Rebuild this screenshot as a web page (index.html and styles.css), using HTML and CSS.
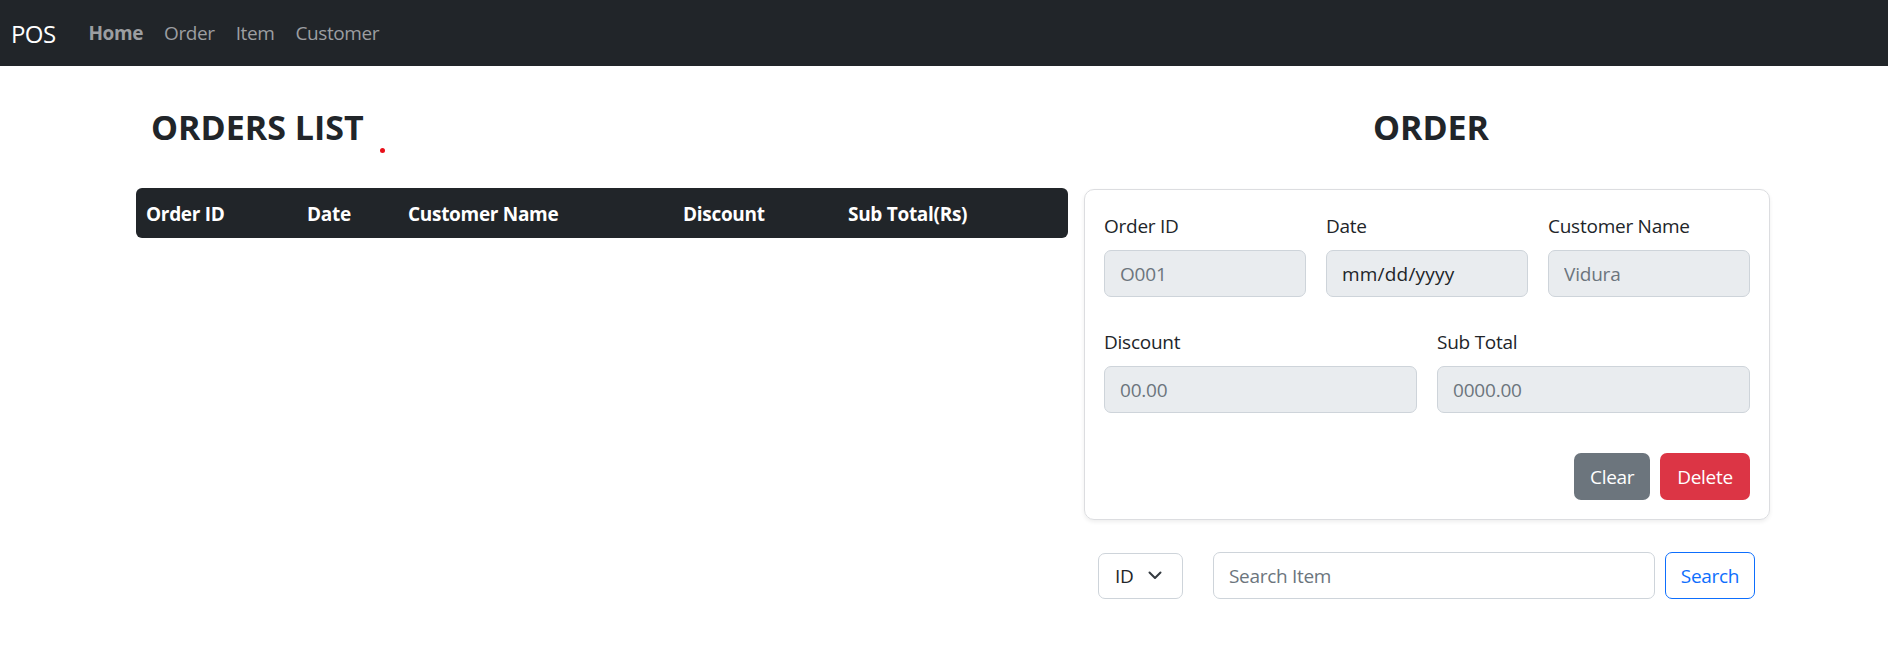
FILE: index.html
```html
<!DOCTYPE html>
<html lang="en">
<head>
<meta charset="utf-8">
<title>POS</title>
<link rel="stylesheet" href="styles.css">
</head>
<body>
<nav class="navbar">
  <span class="brand">POS</span>
  <ul class="nav-links">
    <li class="nav-link active">Home</li>
    <li class="nav-link">Order</li>
    <li class="nav-link">Item</li>
    <li class="nav-link">Customer</li>
  </ul>
</nav>
<main class="page">
  <section class="list-col">
    <div class="list-head">
      <h2 class="title title-left">ORDERS LIST</h2>
      <span class="red-dot"></span>
    </div>
    <div class="table-head">
      <div class="th">Order ID</div>
      <div class="th">Date</div>
      <div class="th">Customer Name</div>
      <div class="th">Discount</div>
      <div class="th">Sub Total(Rs)</div>
    </div>
  </section>
  <section class="order-col">
    <h2 class="title title-center">ORDER</h2>
    <div class="card">
      <div class="form-row three">
        <div class="field">
          <label class="label">Order ID</label>
          <input class="input" type="text" placeholder="O001" readonly>
        </div>
        <div class="field">
          <label class="label">Date</label>
          <input class="input input-dark" type="text" value="mm/dd/yyyy" readonly>
        </div>
        <div class="field">
          <label class="label">Customer Name</label>
          <input class="input" type="text" placeholder="Vidura" readonly>
        </div>
      </div>
      <div class="form-row two">
        <div class="field">
          <label class="label">Discount</label>
          <input class="input" type="text" placeholder="00.00" readonly>
        </div>
        <div class="field">
          <label class="label">Sub Total</label>
          <input class="input" type="text" placeholder="0000.00" readonly>
        </div>
      </div>
      <div class="actions">
        <button class="btn btn-secondary">Clear</button>
        <button class="btn btn-danger">Delete</button>
      </div>
    </div>
    <div class="search-row">
      <div class="select">
        <span>ID</span>
        <svg class="chev" width="14" height="9" viewBox="0 0 14 9"><path d="M1.5 1.5 L7 7 L12.5 1.5" fill="none" stroke="#343a40" stroke-width="2" stroke-linecap="round" stroke-linejoin="round"/></svg>
      </div>
      <input class="search-input" type="text" placeholder="Search Item">
      <button class="btn btn-outline">Search</button>
    </div>
  </section>
</main>
</body>
</html>
```

FILE: styles.css
```css
* { box-sizing: border-box; }
html, body { margin: 0; padding: 0; }
body {
  font-family: "Open Sans", "Noto Sans", sans-serif;
  color: #212529;
  background: #fff;
  font-size: 20px;
  width: 1888px;
}
.navbar {
  height: 66px;
  background: #212529;
  display: flex;
  align-items: center;
  padding-left: 11px;
}
.brand {
  color: #fff;
  font-size: 24px;
  letter-spacing: -0.6px;
  margin-right: 33px;
}
.nav-links {
  list-style: none;
  margin: 0;
  padding: 0;
  display: flex;
  gap: 21px;
}
.nav-link {
  color: #9c9ea1;
  font-size: 19px;
  letter-spacing: -0.4px;
}
.nav-link.active { font-weight: 700; }
.page {
  display: flex;
  gap: 16px;
  padding: 0 118px 0 136px;
}
.list-col { width: 932px; }
.order-col { width: 686px; }
.list-head {
  position: relative;
}
.title {
  margin: 40px 0 0;
  font-size: 34px;
  line-height: 42px;
  font-weight: 700;
  letter-spacing: 0;
}
.title-left { padding-left: 15px; }
.title-center { text-align: center; margin-bottom: 41px; padding-left: 8px; }
.red-dot {
  position: absolute;
  left: 244px;
  top: 42px;
  width: 5px;
  height: 5px;
  border-radius: 50%;
  background: #e8101a;
}
.list-head .title { margin-bottom: 40px; }
.table-head {
  height: 50px;
  background: #212529;
  border-radius: 6px;
  display: grid;
  grid-template-columns: 161px 101px 275px 165px 230px;
  align-items: center;
  color: #fff;
  font-weight: 700;
  font-size: 19px;
  letter-spacing: -0.3px;
  padding-top: 1px;
}
.th { padding-left: 10px; }
.card {
  border: 1px solid #dcdde0;
  border-radius: 10px;
  box-shadow: 0 2px 4px rgba(0,0,0,0.07);
  padding: 21px 19px 19px;
}
.form-row { display: grid; gap: 20px; }
.form-row.three { grid-template-columns: repeat(3, 1fr); margin-bottom: 30px; }
.form-row.two { grid-template-columns: repeat(2, 1fr); margin-bottom: 40px; }
.field { display: flex; flex-direction: column; }
.label {
  font-size: 19px;
  line-height: 30px;
  margin-bottom: 9px;
  letter-spacing: -0.25px;
}
.input {
  height: 47px;
  border: 1px solid #ced4da;
  border-radius: 7px;
  background: #e9ecef;
  padding: 0 15px;
  font-family: inherit;
  font-size: 19px;
  letter-spacing: -0.2px;
  color: #212529;
  outline: none;
  width: 100%;
}
.input-dark { letter-spacing: 0.2px; }
.input::placeholder, .search-input::placeholder { color: #6c757d; opacity: 1; }
.actions { display: flex; justify-content: flex-end; gap: 10px; }
.btn {
  height: 47px;
  border-radius: 7px;
  font-family: inherit;
  font-size: 19px;
  letter-spacing: -0.3px;
  padding: 0 15px;
  border: 1px solid transparent;
  cursor: pointer;
}
.btn-secondary { background: #6c757d; color: #fff; width: 76px; }
.btn-danger { background: #dc3545; color: #fff; width: 90px; }
.search-row {
  display: flex;
  align-items: center;
  margin-top: 32px;
  padding-left: 14px;
}
.select {
  width: 85px;
  height: 46px;
  border: 1px solid #ced4da;
  border-radius: 7px;
  display: flex;
  align-items: center;
  padding-left: 16px;
  font-size: 19px;
  letter-spacing: -0.4px;
  margin-right: 30px;
}
.chev { margin-left: 15px; }
.search-input {
  width: 442px;
  height: 47px;
  border: 1px solid #ced4da;
  border-radius: 7px;
  padding: 0 15px;
  font-family: inherit;
  font-size: 19px;
  letter-spacing: -0.3px;
  margin-right: 10px;
  outline: none;
}
.btn-outline {
  background: #fff;
  color: #0d6efd;
  border-color: #0d6efd;
  width: 90px;
  padding: 0;
}
```
